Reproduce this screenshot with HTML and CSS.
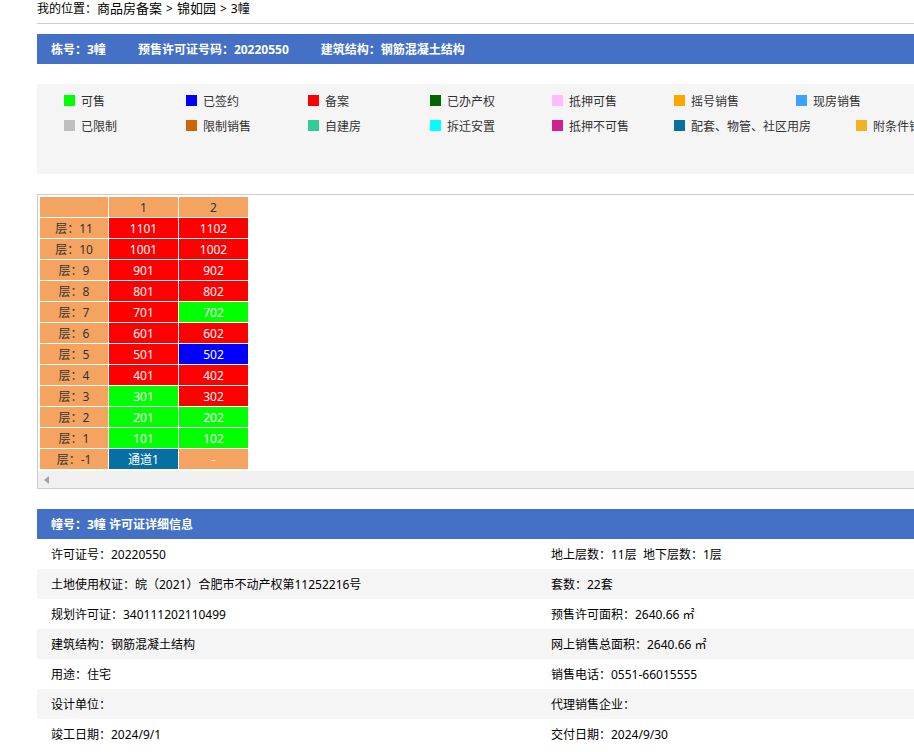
FILE: index.html
```html
<!DOCTYPE html>
<html lang="zh-CN">
<head>
  <meta charset="UTF-8">
  <meta name="viewport" content="width=device-width, initial-scale=1.0">
  <title>3幢 - 锦如园</title>
  <link rel="stylesheet" href="styles.css">
</head>
<body>
  <div class="main">
    <div class="position">我的位置：<a href="#">商品房备案</a><span>&gt;</span><a href="#">锦如园</a><span>&gt;</span>3幢</div>

    <div class="title title-top">
      <span>栋号：3幢</span>
      <span>预售许可证号码：20220550</span>
      <span>建筑结构：钢筋混凝土结构</span>
    </div>

    <div class="legend">
      <ul>
        <li><i class="ks"></i>可售</li>
        <li><i class="qy"></i>已签约</li>
        <li><i class="ba"></i>备案</li>
        <li><i class="cq"></i>已办产权</li>
        <li><i class="dyks"></i>抵押可售</li>
        <li><i class="yh"></i>摇号销售</li>
        <li><i class="xf"></i>现房销售</li>
      </ul>
      <ul>
        <li><i class="xz"></i>已限制</li>
        <li><i class="xzxs"></i>限制销售</li>
        <li><i class="zj"></i>自建房</li>
        <li><i class="cqaz"></i>拆迁安置</li>
        <li><i class="dybks"></i>抵押不可售</li>
        <li class="long"><i class="pt"></i>配套、物管、社区用房</li>
        <li><i class="ftj"></i>附条件销售</li>
      </ul>
    </div>

    <div class="building">
      <table class="rooms">
        <tr><th></th><th>1</th><th>2</th></tr>
        <tr><th>层：11</th><td class="ba"><a href="#">1101</a></td><td class="ba"><a href="#">1102</a></td></tr>
        <tr><th>层：10</th><td class="ba"><a href="#">1001</a></td><td class="ba"><a href="#">1002</a></td></tr>
        <tr><th>层：9</th><td class="ba"><a href="#">901</a></td><td class="ba"><a href="#">902</a></td></tr>
        <tr><th>层：8</th><td class="ba"><a href="#">801</a></td><td class="ba"><a href="#">802</a></td></tr>
        <tr><th>层：7</th><td class="ba"><a href="#">701</a></td><td class="ks"><a href="#">702</a></td></tr>
        <tr><th>层：6</th><td class="ba"><a href="#">601</a></td><td class="ba"><a href="#">602</a></td></tr>
        <tr><th>层：5</th><td class="ba"><a href="#">501</a></td><td class="qy"><a href="#">502</a></td></tr>
        <tr><th>层：4</th><td class="ba"><a href="#">401</a></td><td class="ba"><a href="#">402</a></td></tr>
        <tr><th>层：3</th><td class="ks"><a href="#">301</a></td><td class="ba"><a href="#">302</a></td></tr>
        <tr><th>层：2</th><td class="ks"><a href="#">201</a></td><td class="ks"><a href="#">202</a></td></tr>
        <tr><th>层：1</th><td class="ks"><a href="#">101</a></td><td class="ks"><a href="#">102</a></td></tr>
        <tr><th>层：-1</th><td class="pt"><a href="#">通道1</a></td><td class="none">-</td></tr>
      </table>
      <div class="scroll">
        <button type="button" aria-label="向左滚动">
          <svg width="5" height="8" viewBox="0 0 5 8"><path d="M5 0v8L0 4z" fill="#a0a0a0"/></svg>
        </button>
      </div>
    </div>

    <div class="title">幢号：3幢 许可证详细信息</div>
    <table class="detail">
      <tr><td>许可证号：20220550</td><td>地上层数：11层&nbsp; 地下层数：1层</td></tr>
      <tr><td>土地使用权证：皖（2021）合肥市不动产权第11252216号</td><td>套数：22套</td></tr>
      <tr><td>规划许可证：340111202110499</td><td>预售许可面积：2640.66 ㎡</td></tr>
      <tr><td>建筑结构：钢筋混凝土结构</td><td>网上销售总面积：2640.66 ㎡</td></tr>
      <tr><td>用途：住宅</td><td>销售电话：0551-66015555</td></tr>
      <tr><td>设计单位：</td><td>代理销售企业：</td></tr>
      <tr><td>竣工日期：2024/9/1</td><td>交付日期：2024/9/30</td></tr>
    </table>
  </div>
</body>
</html>
```

FILE: styles.css
```css
* {
  margin: 0;
  padding: 0;
  box-sizing: border-box;
}
body {
  font: 12px/18px "Noto Sans", "Noto Sans CJK SC", sans-serif;
  color: #000;
  background: #fff;
  overflow-x: hidden;
}
a {
  color: inherit;
  text-decoration: none;
}
ul {
  list-style: none;
}
.main {
  min-width: 1000px;
  margin-left: 37px;
}
.position {
  height: 24px;
  line-height: 16px;
  border-bottom: 1px solid #ccc;
  margin-bottom: 10px;
}
.position a {
  font-size: 13px;
}
.position span {
  margin: 0 4px;
}
.title {
  display: flex;
  gap: 32px;
  height: 30px;
  line-height: 30px;
  padding: 1px 0 0 14px;
  background: #4471c5;
  color: #fff;
  font-weight: bold;
}
.title-top {
  margin-bottom: 20px;
}

/* status legend */
.legend {
  height: 90px;
  padding: 5px 0 0 27px;
  margin-bottom: 20px;
  background: #f5f5f5;
  color: #333;
}
.legend ul {
  display: flex;
}
.legend li {
  display: flex;
  align-items: center;
  flex: none;
  width: 122px;
  height: 25px;
}
.legend .long {
  width: 182px;
}
.legend i {
  width: 11px;
  height: 11px;
  margin-right: 6px;
  margin-bottom: 2px;
}
.ks { background: #0f0; }
.qy { background: #00f; }
.ba { background: #f00; }
.cq { background: #060; }
.dyks { background: #fbf; }
.yh { background: #ffa500; }
.xf { background: #3da1ff; }
.xz { background: #bebebe; }
.xzxs { background: #c60; }
.zj { background: #3c9; }
.cqaz { background: #0ff; }
.dybks { background: #d02090; }
.pt { background: #0670a2; }
.ftj { background: #eeb422; }

/* rooms by floor */
.building {
  border: 1px solid #ccc;
  padding-top: 1px;
  margin-bottom: 20px;
}
.rooms {
  table-layout: fixed;
  width: 210px;
  margin: 0 0 1px 1px;
  border-spacing: 1px;
}
.rooms th,
.rooms td {
  width: 69px;
  height: 20px;
  padding-top: 1px;
  line-height: 19px;
  text-align: center;
  font-weight: normal;
}
.rooms tr th:first-child {
  width: 68px;
}
.rooms th {
  background: #f4a460;
  color: #333;
}
.rooms td {
  color: #fff;
}
.rooms .none {
  background: #f4a460;
}
.scroll {
  display: flex;
  height: 17px;
  background: #f0f0f0;
}
.scroll button {
  display: flex;
  align-items: center;
  justify-content: center;
  width: 17px;
  border: none;
  background: none;
}

.detail {
  table-layout: fixed;
  width: 100%;
  border-collapse: collapse;
}
.detail td {
  height: 30px;
  padding: 2px 0 0 14px;
}
.detail td:first-child {
  width: 500px;
}
.detail tr:nth-child(even) {
  background: #f5f5f5;
}
```
